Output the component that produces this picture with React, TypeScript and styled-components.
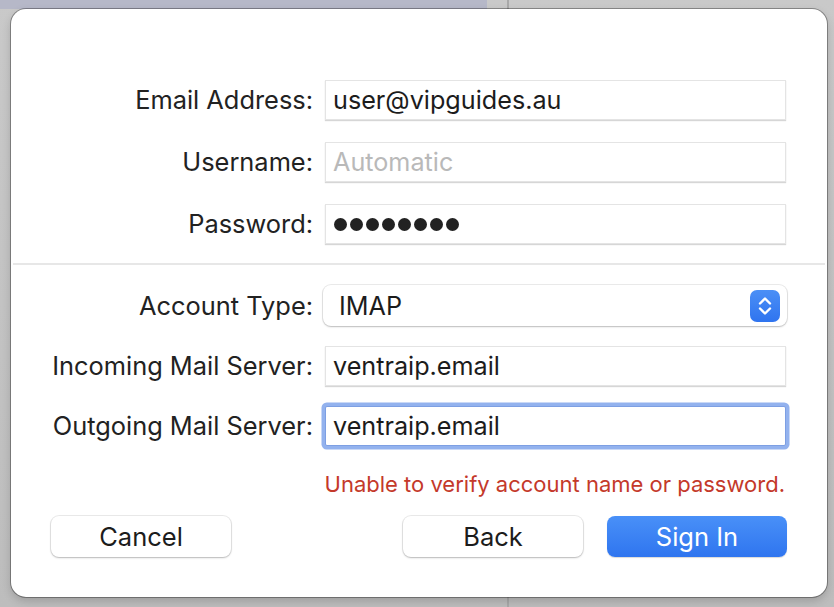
import styled, { createGlobalStyle } from "styled-components";

const GlobalStyle = createGlobalStyle`
  html, body {
    margin: 0;
    padding: 0;
    width: 834px;
    height: 607px;
    overflow: hidden;
  }
  body {
    font-family: Inter, "Noto Sans", sans-serif;
  }
`;

const Desktop = styled.div`
  width: 834px;
  height: 607px;
  box-sizing: border-box;
  padding: 9px 7px 10px 11px;
  background:
    linear-gradient(to right, transparent 507px, #a9a9a9 507px, #a9a9a9 509px, transparent 509px),
    linear-gradient(to bottom, #b6b8c8 9px, transparent 9px) 0 0 / 487px 100% no-repeat,
    linear-gradient(to bottom, #c9c9c9, #bdbdbd);
`;

const Sheet = styled.div`
  height: 588px;
  box-sizing: border-box;
  background: #ffffff;
  border-radius: 15px;
  box-shadow: 0 0 0 1px rgba(0, 0, 0, 0.32), 0 4px 10px rgba(0, 0, 0, 0.18);
  display: flex;
  flex-direction: column;
  padding-top: 71px;
`;

const Grid = styled.div<{ $gap?: number }>`
  display: grid;
  grid-template-columns: 302px 461px;
  column-gap: 12px;
  row-gap: ${(p) => p.$gap ?? 22}px;
  align-items: center;
`;

const Label = styled.label`
  justify-self: end;
  font-size: 25.4px;
  line-height: 30px;
  color: #222;
`;

const Field = styled.input<{ $focused?: boolean }>`
  box-sizing: border-box;
  height: 40px;
  width: 461px;
  margin: 0;
  padding: 0 7px;
  border: 1px solid ${(p) => (p.$focused ? "#7d9fe3" : "#e4e4e4")};
  border-radius: ${(p) => (p.$focused ? "2px" : "0")};
  background: #fff;
  font-family: Inter, sans-serif;
  font-size: 25.2px;
  color: #1c1c1c;
  outline: none;
  box-shadow: ${(p) =>
    p.$focused
      ? "0 0 0 3.5px #93b2ee"
      : "0 1px 1px rgba(0, 0, 0, 0.16)"};
  &::placeholder {
    color: #b9b9b9;
  }
`;

const Dots = styled.div`
  box-sizing: border-box;
  height: 40px;
  width: 461px;
  padding: 0 8px;
  display: flex;
  align-items: center;
  gap: 3px;
  border: 1px solid #e4e4e4;
  box-shadow: 0 1px 1px rgba(0, 0, 0, 0.16);
`;

const Dot = styled.span`
  width: 13px;
  height: 13px;
  border-radius: 50%;
  background: #222;
`;

const Divider = styled.div`
  height: 2px;
  background: #e7e7e7;
  margin: 19px 2px 20px;
`;

const Select = styled.div`
  box-sizing: border-box;
  height: 41px;
  width: 464px;
  margin-left: -2px;
  padding: 0 7px 0 16px;
  border-radius: 8px;
  background: #fff;
  box-shadow: 0 0 0 1px rgba(0, 0, 0, 0.08), 0 1px 2px rgba(0, 0, 0, 0.2);
  display: flex;
  align-items: center;
  justify-content: space-between;
  font-size: 25.2px;
  color: #1c1c1c;
`;

const Stepper = styled.span`
  width: 30px;
  height: 32px;
  border-radius: 7px;
  background: linear-gradient(to bottom, #4b8ff6, #2f74ef);
  display: flex;
  align-items: center;
  justify-content: center;
`;

const ErrorText = styled.div`
  margin: 26px 42px 0 0;
  text-align: right;
  font-size: 22px;
  line-height: 24px;
  color: #c4392a;
`;

const ButtonRow = styled.div`
  display: flex;
  gap: 24px;
  margin-top: 20px;
  padding: 0 40px;
`;

const Button = styled.button<{ $primary?: boolean }>`
  width: 180px;
  height: 41px;
  border: none;
  border-radius: 8px;
  font-family: Inter, sans-serif;
  font-size: 25.5px;
  cursor: pointer;
  color: ${(p) => (p.$primary ? "#ffffff" : "#1c1c1c")};
  background: ${(p) =>
    p.$primary ? "linear-gradient(to bottom, #4990f8, #2f75ef)" : "#ffffff"};
  box-shadow: ${(p) =>
    p.$primary
      ? "0 1px 1px rgba(0, 0, 0, 0.15)"
      : "0 0 0 1px rgba(0, 0, 0, 0.08), 0 1px 2px rgba(0, 0, 0, 0.22)"};
  &:first-child {
    margin-right: auto;
  }
`;

function App() {
  return (
    <>
      <GlobalStyle />
      <Desktop>
        <Sheet>
          <Grid>
            <Label>Email Address:</Label>
            <Field readOnly value="user@vipguides.au" />
            <Label>Username:</Label>
            <Field readOnly placeholder="Automatic" />
            <Label>Password:</Label>
            <Dots>
              {Array.from({ length: 8 }).map((_, i) => (
                <Dot key={i} />
              ))}
            </Dots>
          </Grid>
          <Divider />
          <Grid $gap={20}>
            <Label>Account Type:</Label>
            <Select>
              IMAP
              <Stepper>
                <svg width="16" height="22" viewBox="0 0 16 22" fill="none">
                  <path
                    d="M3 8.5 L8 3.5 L13 8.5 M3 13.5 L8 18.5 L13 13.5"
                    stroke="#fff"
                    strokeWidth="2.4"
                    strokeLinecap="round"
                    strokeLinejoin="round"
                  />
                </svg>
              </Stepper>
            </Select>
            <Label>Incoming Mail Server:</Label>
            <Field readOnly value="ventraip.email" />
            <Label>Outgoing Mail Server:</Label>
            <Field readOnly $focused value="ventraip.email" />
          </Grid>
          <ErrorText>Unable to verify account name or password.</ErrorText>
          <ButtonRow>
            <Button>Cancel</Button>
            <Button>Back</Button>
            <Button $primary>Sign In</Button>
          </ButtonRow>
        </Sheet>
      </Desktop>
    </>
  );
}

export default App;
